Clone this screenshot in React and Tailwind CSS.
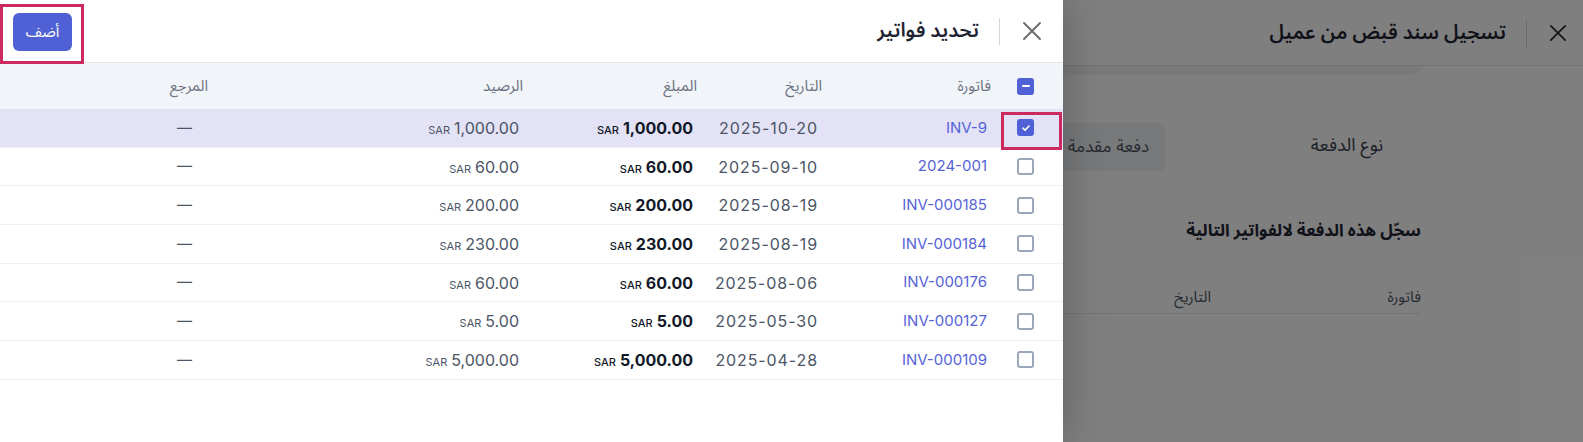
import React from "react";

const rows = [
  { inv: "INV-9", date: "2025-10-20", amount: "1,000.00", checked: true },
  { inv: "2024-001", date: "2025-09-10", amount: "60.00" },
  { inv: "INV-000185", date: "2025-08-19", amount: "200.00" },
  { inv: "INV-000184", date: "2025-08-19", amount: "230.00" },
  { inv: "INV-000176", date: "2025-08-06", amount: "60.00" },
  { inv: "INV-000127", date: "2025-05-30", amount: "5.00" },
  { inv: "INV-000109", date: "2025-04-28", amount: "5,000.00" },
];

const font = {
  fontFamily:
    'Inter, "Noto Sans Arabic", "Noto Sans", "DejaVu Sans", sans-serif',
};

function CloseIcon({ size = 20, className = "" }) {
  return (
    <svg
      width={size}
      height={size}
      viewBox="0 0 20 20"
      fill="none"
      stroke="currentColor"
      strokeWidth="1.9"
      strokeLinecap="round"
      className={className}
    >
      <path d="M2 2L18 18M18 2L2 18" />
    </svg>
  );
}

function Checkbox({ state }) {
  if (state === "checked" || state === "mixed") {
    return (
      <span className="w-[17px] h-[17px] rounded-[3px] bg-[#5060d6] flex items-center justify-center">
        {state === "checked" ? (
          <svg width="10" height="10" viewBox="0 0 10 10" fill="none">
            <path
              d="M2 5.2L4.1 7.2L8 3"
              stroke="white"
              strokeWidth="1.6"
              strokeLinecap="round"
              strokeLinejoin="round"
            />
          </svg>
        ) : (
          <span className="w-[8px] h-[2px] bg-white rounded-full" />
        )}
      </span>
    );
  }
  return (
    <span className="w-[17px] h-[17px] rounded-[3px] border-2 border-[#9aa6ba] bg-white" />
  );
}

const cols = "grid grid-cols-[62px_169px_125px_174px_315px_1fr]";

function InvoicePicker() {
  return (
    <div
      dir="rtl"
      className="absolute left-0 top-0 bottom-0 w-[1063px] bg-white shadow-[0_0_40px_rgba(0,0,0,0.25)]"
    >
      <div className="h-[63px] border-b border-[#e5e7eb] flex items-center pr-[21px] pl-[13px]">
        <CloseIcon size={20} className="text-[#6b6b6b]" />
        <span className="w-px h-[27px] bg-[#d4d6da] mr-[22px] ml-[20px]" />
        <h2 className="text-[20px] font-semibold text-[#1f2433] leading-none pb-[2px]">
          تحديد فواتير
        </h2>
        <button className="mr-auto mt-[2px] h-[38px] w-[59px] rounded-md bg-[#5061d6] text-white text-[15px] flex items-center justify-center">
          أضف
        </button>
      </div>

      <div className={`${cols} h-[46px] bg-[#f1f4f9] items-center text-[15px] text-[#6b7280]`}>
        <div className="flex justify-end pl-[16px]">
          <Checkbox state="mixed" />
        </div>
        <div className="pr-[10px]">فاتورة</div>
        <div className="pr-[10px]">التاريخ</div>
        <div className="pr-[10px]">المبلغ</div>
        <div className="pr-[10px]">الرصيد</div>
        <div className="pr-[10px]">المرجع</div>
      </div>

      {rows.map((r) => (
        <div
          key={r.inv}
          className={`${cols} h-[38.7px] items-center border-b border-[#eef0f3] ${
            r.checked ? "bg-[#e3e2f6]" : ""
          }`}
        >
          <div className="flex justify-end pl-[16px]">
            <Checkbox state={r.checked ? "checked" : "none"} />
          </div>
          <div className="pr-[14px] text-[15px] text-[#5663d8]">{r.inv}</div>
          <div className="pr-[14px] text-[16px] tracking-[0.9px] text-[#4b5567]">
            {r.date}
          </div>
          <div className="pr-[14px]">
            <span dir="ltr" className="inline-flex items-baseline gap-[4px] text-[#111827]">
              <span className="text-[11px] font-medium">SAR</span>
              <span className="text-[16px] font-bold">{r.amount}</span>
            </span>
          </div>
          <div className="pr-[14px]">
            <span dir="ltr" className="inline-flex items-baseline gap-[4px] text-[#4b5567]">
              <span className="text-[11px]">SAR</span>
              <span className="text-[16px]">{r.amount}</span>
            </span>
          </div>
          <div className="pr-[26px] text-[15px] text-[#4b5567]">—</div>
        </div>
      ))}

      <div className="absolute left-0 top-[4px] w-[84px] h-[60px] border-[3px] border-[#cc2a5e] pointer-events-none" />
      <div className="absolute left-[1001px] top-[112px] w-[61px] h-[38px] border-[3px] border-[#cc2a5e] pointer-events-none" />
    </div>
  );
}

function ReceiptDrawer() {
  return (
    <div dir="rtl" className="absolute inset-0 bg-white">
      <div className="h-[66px] border-b border-[#e5e7eb] flex items-center pr-[16px]">
        <CloseIcon size={18} className="text-[#2b2b2b]" />
        <span className="w-px h-[28px] bg-[#d4d6da] mr-[22px] ml-[20px]" />
        <h2 className="text-[20px] font-semibold text-[#1f2433] leading-none pb-[2px]">
          تسجيل سند قبض من عميل
        </h2>
      </div>
      <div className="pr-[162px]">
        <div className="h-[9px] w-[1260px] bg-[#f3f4f6] rounded-b-[10px]" />
        <div className="flex items-center mt-[48px] h-[48px]">
          <div className="w-[255px] pr-[38px] pb-[5px] text-[18px] text-[#374151]">نوع الدفعة</div>
          <div className="h-[48px] w-[200px] pr-[17px] rounded-lg bg-[#f1f2f4] flex items-center text-[17px] text-[#4b5563]">
            دفعة مقدمة
          </div>
        </div>
        <div className="mt-[47px] text-[17px] font-bold text-[#1f2433]">
          سجّل هذه الدفعة لالفواتير التالية
        </div>
        <div className="mt-[38px] w-[1260px] h-[32px] flex items-center border-b border-[#e5e7eb] text-[15px] text-[#4b5563]">
          <div className="w-[210px]">فاتورة</div>
          <div>التاريخ</div>
        </div>
      </div>
    </div>
  );
}

export default function App() {
  return (
    <div style={font} className="relative w-[1583px] h-[442px] overflow-hidden bg-white">
      <ReceiptDrawer />
      <div className="absolute inset-0 bg-black/50" />
      <InvoicePicker />
    </div>
  );
}
